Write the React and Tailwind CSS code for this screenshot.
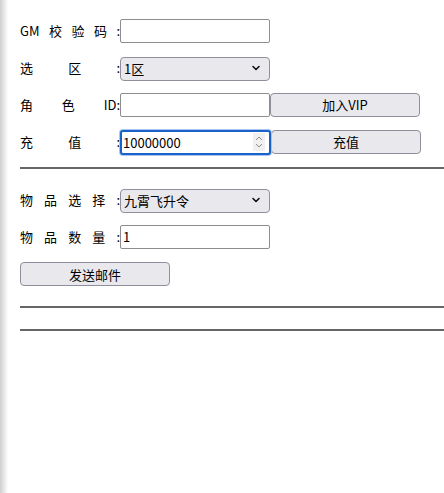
import { useState } from "react";

const font = { fontFamily: '"Noto Sans CJK SC", "Microsoft YaHei", "Noto Sans", sans-serif' };

function Label({ parts }) {
  return (
    <div className="flex w-[100px] shrink-0 justify-between text-[13px] text-black">
      {parts.map((p, i) => (
        <span key={i}>{p}</span>
      ))}
    </div>
  );
}

function Chevron() {
  return (
    <svg width="10" height="10" viewBox="0 0 10 10" className="pointer-events-none absolute right-[9px] top-1/2 -translate-y-1/2">
      <path d="M2 3.5 L5 6.5 L8 3.5" fill="none" stroke="#111" strokeWidth="1.6" strokeLinecap="round" strokeLinejoin="round" />
    </svg>
  );
}

const inputCls =
  "h-[24px] w-[150px] rounded-[2px] border border-[#8d8d8d] bg-white px-[2px] text-[13px] text-black outline-none";
const btnCls =
  "h-[24px] w-[150px] rounded-[4px] border border-[#8f8f9d] bg-[#e9e9ed] text-[13px] text-black";

const App = () => {
  const [code, setCode] = useState("");
  const [zone, setZone] = useState("1区");
  const [roleId, setRoleId] = useState("");
  const [amount, setAmount] = useState("10000000");
  const [item, setItem] = useState("九霄飞升令");
  const [count, setCount] = useState("1");

  return (
    <div className="flex min-h-[493px] bg-white" style={font}>
      <div className="w-[8px] shrink-0 bg-gradient-to-r from-[#cfcfcf] to-white" />
      <div className="flex-1 pl-[12px] pt-[19px]">
        {/* Recharge section */}
        <div className="flex flex-col gap-[12px]">
          <div className="flex items-center">
            <Label parts={["GM", "校", "验", "码", ":"]} />
            <input className={inputCls} value={code} onChange={(e) => setCode(e.target.value)} />
          </div>
          <div className="flex items-center">
            <Label parts={["选", "区", ":"]} />
            <div className="relative">
              <select
                value={zone}
                onChange={(e) => setZone(e.target.value)}
                className="h-[24px] w-[150px] appearance-none rounded-[4px] border border-[#8f8f9d] bg-[#e9e9ed] px-[3px] text-[13px] text-black outline-none"
              >
                <option>1区</option>
                <option>2区</option>
              </select>
              <Chevron />
            </div>
          </div>
          <div className="flex items-center">
            <Label parts={["角", "色", "ID:"]} />
            <input className={inputCls} value={roleId} onChange={(e) => setRoleId(e.target.value)} />
            <button className={btnCls}>加入VIP</button>
          </div>
          <div className="flex items-center">
            <Label parts={["充", "值", ":"]} />
            <div className="relative">
              <input
                className="h-[25px] w-[151px] rounded-[3px] border-2 border-[#1a62c8] bg-white px-[1px] text-[13px] text-black outline-none ring-1 ring-[#a9c6ef]"
                value={amount}
                onChange={(e) => setAmount(e.target.value)}
              />
              <svg width="12" height="18" viewBox="0 0 12 18" className="pointer-events-none absolute right-[6px] top-1/2 -translate-y-1/2">
                <rect width="12" height="18" fill="#f0f0f0" />
                <path d="M3 7 L6 4 L9 7" fill="none" stroke="#8a8a8a" strokeWidth="1" />
                <path d="M3 11 L6 14 L9 11" fill="none" stroke="#8a8a8a" strokeWidth="1" />
              </svg>
            </div>
            <button className={btnCls}>充值</button>
          </div>
        </div>

        <hr className="mt-[12px] border-t-2 border-[#666]" />

        {/* Mail section */}
        <div className="mt-[18px] flex flex-col gap-[12px]">
          <div className="flex items-center">
            <Label parts={["物", "品", "选", "择", ":"]} />
            <div className="relative">
              <select
                value={item}
                onChange={(e) => setItem(e.target.value)}
                className="h-[24px] w-[150px] appearance-none rounded-[4px] border border-[#8f8f9d] bg-[#e9e9ed] px-[3px] text-[13px] text-black outline-none"
              >
                <option>九霄飞升令</option>
              </select>
              <Chevron />
            </div>
          </div>
          <div className="flex items-center">
            <Label parts={["物", "品", "数", "量", ":"]} />
            <input className={inputCls} value={count} onChange={(e) => setCount(e.target.value)} />
          </div>
          <div>
            <button className={btnCls}>发送邮件</button>
          </div>
        </div>

        <hr className="mt-[20px] border-t-2 border-[#666]" />
        <hr className="mt-[21px] border-t-2 border-[#666]" />
      </div>
    </div>
  );
};

export default App;
